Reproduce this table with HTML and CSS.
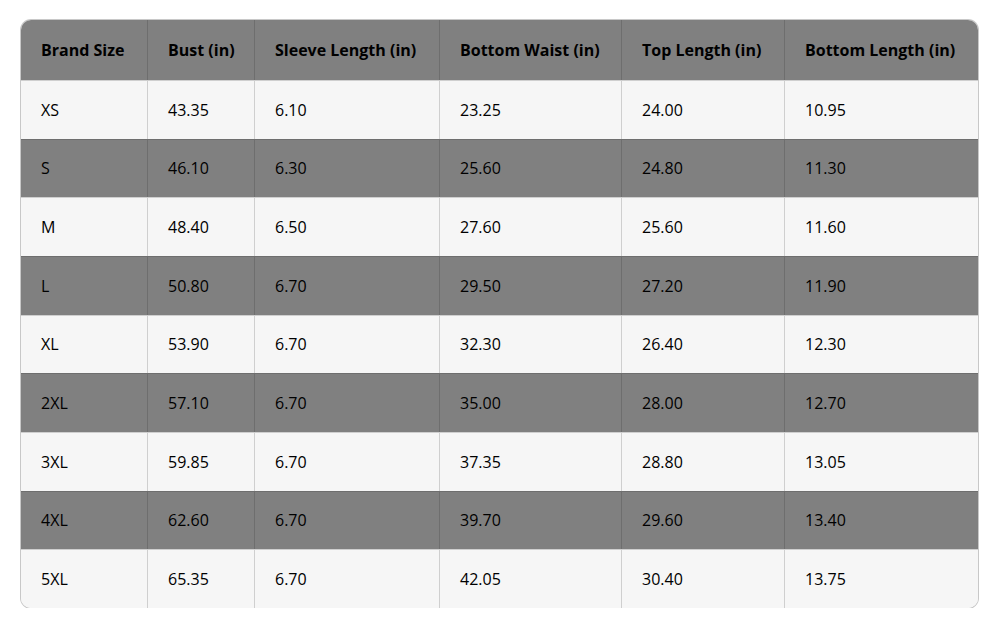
FILE: index.html
```html
<!DOCTYPE html>
<html>
<head>
<meta charset="utf-8">
<link rel="stylesheet" href="styles.css">
</head>
<body>
<div class="wrap">
<table class="sizes">
<colgroup>
<col class="c1"><col class="c2"><col class="c3"><col class="c4"><col class="c5"><col class="c6">
</colgroup>
<thead>
<tr><th>Brand Size</th><th>Bust (in)</th><th>Sleeve Length (in)</th><th>Bottom Waist (in)</th><th>Top Length (in)</th><th>Bottom Length (in)</th></tr>
</thead>
<tbody>
<tr><td>XS</td><td>43.35</td><td>6.10</td><td>23.25</td><td>24.00</td><td>10.95</td></tr>
<tr><td>S</td><td>46.10</td><td>6.30</td><td>25.60</td><td>24.80</td><td>11.30</td></tr>
<tr><td>M</td><td>48.40</td><td>6.50</td><td>27.60</td><td>25.60</td><td>11.60</td></tr>
<tr><td>L</td><td>50.80</td><td>6.70</td><td>29.50</td><td>27.20</td><td>11.90</td></tr>
<tr><td>XL</td><td>53.90</td><td>6.70</td><td>32.30</td><td>26.40</td><td>12.30</td></tr>
<tr><td>2XL</td><td>57.10</td><td>6.70</td><td>35.00</td><td>28.00</td><td>12.70</td></tr>
<tr><td>3XL</td><td>59.85</td><td>6.70</td><td>37.35</td><td>28.80</td><td>13.05</td></tr>
<tr><td>4XL</td><td>62.60</td><td>6.70</td><td>39.70</td><td>29.60</td><td>13.40</td></tr>
<tr><td>5XL</td><td>65.35</td><td>6.70</td><td>42.05</td><td>30.40</td><td>13.75</td></tr>
</tbody>
</table>
</div>
</body>
</html>
```
FILE: styles.css
```css
html, body {
  margin: 0;
  padding: 0;
  background: #ffffff;
}
.wrap {
  padding: 20px 0 0 21px;
}
.sizes {
  width: 957px;
  table-layout: fixed;
  border-collapse: separate;
  border-spacing: 0;
  border-radius: 10px;
  overflow: hidden;
  box-shadow: 0 0 0 1px #c8c8c8;
  font-family: "Open Sans", "Noto Sans", sans-serif;
  font-size: 16px;
  font-weight: 500;
  color: #000;
}
.c1 { width: 126px; }
.c2 { width: 107px; }
.c3 { width: 185px; }
.c4 { width: 182px; }
.c5 { width: 163px; }
.c6 { width: 194px; }
.sizes th, .sizes td {
  text-align: left;
  padding: 0 0 0 20px;
  border-left: 1px solid #cfcfcf;
  border-top: 1px solid #cfcfcf;
  white-space: nowrap;
}
.sizes th:first-child, .sizes td:first-child {
  border-left: none;
}
.sizes thead tr {
  height: 60px;
}
.sizes th {
  background: #808080;
  font-weight: 700;
  border-top: none;
  border-left-color: #6e6e6e;
}
.sizes tbody tr {
  height: 58.67px;
}
.sizes tbody tr:nth-child(odd) td {
  background: #f6f6f6;
}
.sizes tbody tr:nth-child(even) td {
  background: #808080;
  border-color: #6e6e6e;
}
```
